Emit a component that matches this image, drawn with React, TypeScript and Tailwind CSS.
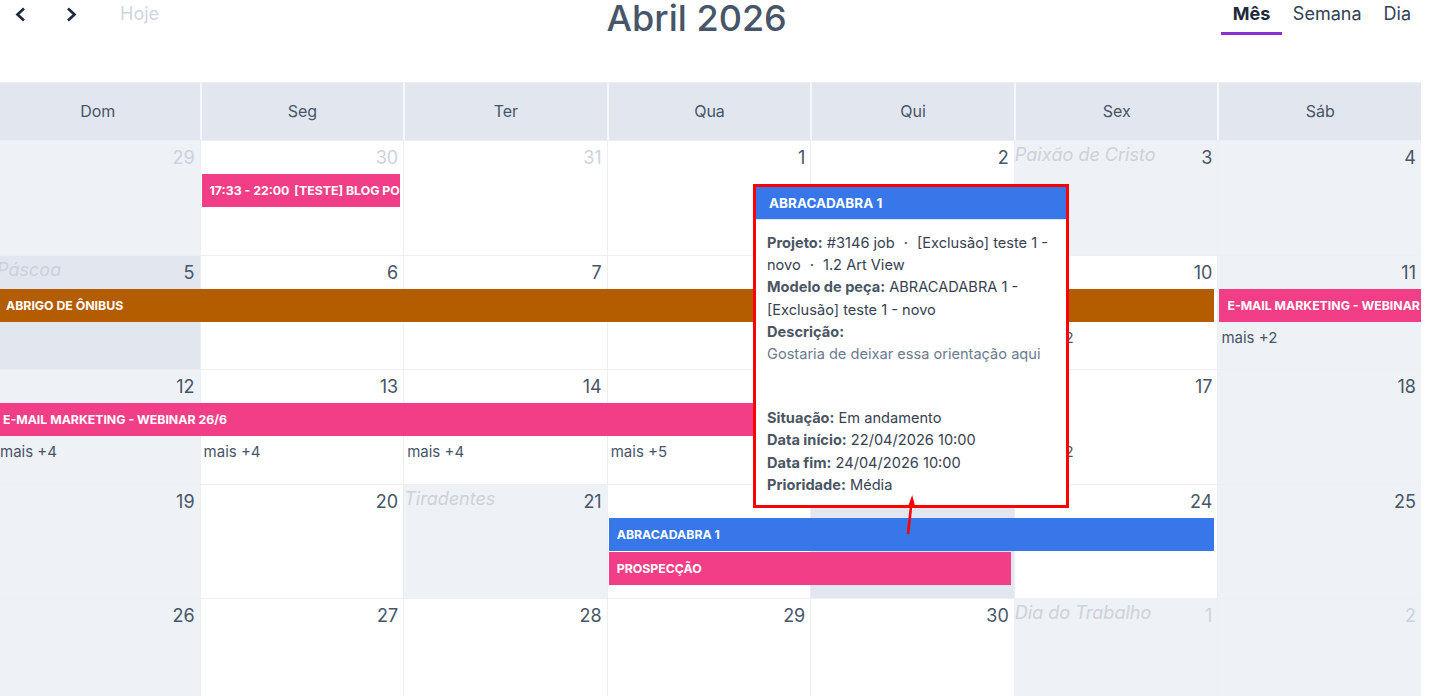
import React from "react";

type Tone = "white" | "light" | "dark";

const toneClass: Record<Tone, string> = {
  white: "bg-white",
  light: "bg-[#eef1f6]",
  dark: "bg-[#e2e7ef]",
};

const colStart = ["col-start-1", "col-start-2", "col-start-3", "col-start-4", "col-start-5", "col-start-6", "col-start-7"];
const colSpan = ["col-span-1", "col-span-2", "col-span-3", "col-span-4", "col-span-5", "col-span-6", "col-span-7"];
const rowStart = ["row-start-1", "row-start-2", "row-start-3", "row-start-4"];

interface Day {
  n: number;
  out?: boolean;
  tone: Tone;
  holiday?: string;
}

interface Bar {
  col: number;
  span: number;
  row: number;
  title: string;
  time?: string;
  color: string;
  starts: boolean;
  ends: boolean;
  pad?: string;
}

interface More {
  col: number;
  row: number;
  count: number;
}

interface Week {
  days: Day[];
  bars: Bar[];
  more: More[];
}

const PINK = "bg-[#f23e86]";
const BROWN = "bg-[#b35c00]";
const BLUE = "bg-[#3777e9]";

const weeks: Week[] = [
  {
    days: [
      { n: 29, out: true, tone: "light" },
      { n: 30, out: true, tone: "white" },
      { n: 31, out: true, tone: "white" },
      { n: 1, tone: "white" },
      { n: 2, tone: "white" },
      { n: 3, tone: "light", holiday: "Paixão de Cristo" },
      { n: 4, tone: "light" },
    ],
    bars: [
      {
        col: 1,
        span: 1,
        row: 1,
        time: "17:33 - 22:00",
        title: "[TESTE] BLOG POST DE LANÇAMENTO",
        color: PINK,
        starts: true,
        ends: true,
      },
    ],
    more: [],
  },
  {
    days: [
      { n: 5, tone: "dark", holiday: "Páscoa" },
      { n: 6, tone: "white" },
      { n: 7, tone: "white" },
      { n: 8, tone: "white" },
      { n: 9, tone: "white" },
      { n: 10, tone: "white" },
      { n: 11, tone: "light" },
    ],
    bars: [
      { col: 0, span: 6, row: 1, title: "ABRIGO DE ÔNIBUS", color: BROWN, starts: false, ends: true, pad: "pl-[10px]" },
      { col: 6, span: 1, row: 1, title: "E-MAIL MARKETING - WEBINAR 26/6", color: PINK, starts: true, ends: false },
    ],
    more: [
      { col: 5, row: 2, count: 2 },
      { col: 6, row: 2, count: 2 },
    ],
  },
  {
    days: [
      { n: 12, tone: "light" },
      { n: 13, tone: "white" },
      { n: 14, tone: "white" },
      { n: 15, tone: "white" },
      { n: 16, tone: "white" },
      { n: 17, tone: "white" },
      { n: 18, tone: "light" },
    ],
    bars: [
      { col: 0, span: 5, row: 1, title: "E-MAIL MARKETING - WEBINAR 26/6", color: PINK, starts: false, ends: true, pad: "pl-[7px]" },
    ],
    more: [
      { col: 0, row: 2, count: 4 },
      { col: 1, row: 2, count: 4 },
      { col: 2, row: 2, count: 4 },
      { col: 3, row: 2, count: 5 },
      { col: 4, row: 2, count: 3 },
      { col: 5, row: 2, count: 2 },
    ],
  },
  {
    days: [
      { n: 19, tone: "light" },
      { n: 20, tone: "white" },
      { n: 21, tone: "light", holiday: "Tiradentes" },
      { n: 22, tone: "white" },
      { n: 23, tone: "dark" },
      { n: 24, tone: "white" },
      { n: 25, tone: "light" },
    ],
    bars: [
      { col: 3, span: 3, row: 1, title: "ABRACADABRA 1", color: BLUE, starts: true, ends: true },
      { col: 3, span: 2, row: 2, title: "PROSPECÇÃO", color: PINK, starts: true, ends: true },
    ],
    more: [],
  },
  {
    days: [
      { n: 26, tone: "light" },
      { n: 27, tone: "white" },
      { n: 28, tone: "white" },
      { n: 29, tone: "white" },
      { n: 30, tone: "white" },
      { n: 1, out: true, tone: "light", holiday: "Dia do Trabalho" },
      { n: 2, out: true, tone: "light" },
    ],
    bars: [],
    more: [],
  },
];

const weekdayNames = ["Dom", "Seg", "Ter", "Qua", "Qui", "Sex", "Sáb"];

function Chevron({ dir }: { dir: "left" | "right" }) {
  return (
    <svg width="13" height="15" viewBox="0 0 13 15" fill="none">
      <polyline
        points={dir === "left" ? "10,1.5 3.5,7.5 10,13.5" : "3,1.5 9.5,7.5 3,13.5"}
        stroke="#1e293b"
        strokeWidth="2.7"
        strokeLinejoin="miter"
      />
    </svg>
  );
}

function WeekRow({ week }: { week: Week }) {
  return (
    <div className="relative h-[114.5px] border-t border-[#eceff4]">
      {/* day backgrounds */}
      <div className="absolute inset-0 grid grid-cols-7">
        {week.days.map((d, i) => (
          <div
            key={i}
            className={`${toneClass[d.tone]} ${i > 0 ? "border-l border-[#eceff4]" : ""}`}
          />
        ))}
      </div>
      {/* numbers, events and "mais" links */}
      <div className="relative grid grid-cols-7">
        {week.days.map((d, i) => (
          <div
            key={`n${i}`}
            className={`${colStart[i]} row-start-1 flex h-[33px] items-start justify-between overflow-visible`}
          >
            <span className="whitespace-nowrap pl-[1px] pt-[3px] text-[18px] italic leading-[22px] text-[#cdd2da]">
              {d.holiday ?? ""}
            </span>
            <span
              className={`pr-[5px] pt-[5px] text-[18px] leading-[24px] ${d.out ? "text-[#cbd3de]" : "text-[#475569]"}`}
            >
              {d.n}
            </span>
          </div>
        ))}
        {week.bars.map((b, i) => (
          <div
            key={`b${i}`}
            className={`${colStart[b.col]} ${colSpan[b.span - 1]} ${rowStart[b.row]} mb-[1px] h-[33px] overflow-hidden whitespace-nowrap ${b.color} ${b.starts ? "ml-[2px]" : ""} ${b.ends ? "mr-[3px]" : ""} ${b.pad ?? "pl-[8px]"} text-[12.3px] font-bold leading-[33px] text-white`}
          >
            {b.time && <span className="mr-[5px]">{b.time}</span>}
            {b.title}
          </div>
        ))}
        {week.more.map((m, i) => (
          <div
            key={`m${i}`}
            className={`${colStart[m.col]} ${rowStart[m.row]} pl-[4px] pt-[5px] text-[15px] leading-[20px] text-[#475569]`}
          >
            mais +{m.count}
          </div>
        ))}
      </div>
    </div>
  );
}

function Dot() {
  return <span className="mx-[9px]">·</span>;
}

function Field({ label, children }: { label: string; children?: React.ReactNode }) {
  return (
    <p>
      <span className="font-bold text-[#4b5563]">{label}</span> {children}
    </p>
  );
}

export default function App() {
  return (
    <div className="relative h-[696px] w-[1431px] overflow-hidden bg-white font-['Inter',sans-serif]">
      {/* toolbar */}
      <div className="flex h-[82px] items-start justify-between pr-[9px]">
        <div className="flex items-start">
          <button className="ml-[14px] mt-[7px]">
            <Chevron dir="left" />
          </button>
          <button className="ml-[38px] mt-[7px]">
            <Chevron dir="right" />
          </button>
          <button className="ml-[42px] pr-[13px] pt-[2px] text-[18px] leading-[24px] text-[#cfd6e2]">
            Hoje
          </button>
        </div>
        <h1 className="text-[36px] font-medium leading-[36px] text-[#475569]">Abril 2026</h1>
        <div className="flex items-start">
          <div className="border-b-[3px] border-[#8b2fd0] px-[11.5px] pb-[6px] pt-[2px] text-[18px] font-bold leading-[24px] text-[#1e293b]">
            Mês
          </div>
          <div className="px-[11px] pt-[2px] text-[18px] leading-[24px] text-[#334155]">Semana</div>
          <div className="px-[11px] pt-[2px] text-[18px] leading-[24px] text-[#334155]">Dia</div>
        </div>
      </div>

      {/* month grid */}
      <div className="-ml-[4px] w-[1425px]">
        <div className="grid h-[58px] grid-cols-7 border-t border-[#eceff4] bg-[#e2e7ef]">
          {weekdayNames.map((n, i) => (
            <div
              key={n}
              className={`flex items-center justify-center pb-[1px] text-[16px] text-[#475569] ${i > 0 ? "border-l-2 border-[#f5f7fa]" : ""}`}
            >
              {n}
            </div>
          ))}
        </div>
        {weeks.map((w, i) => (
          <WeekRow key={i} week={w} />
        ))}
      </div>

      {/* event popover */}
      <div className="absolute left-[906px] top-[503px] h-[9px] w-[9px] rotate-45 border border-[#cbd5e1] bg-white" />
      <div className="absolute left-[753px] top-[184px] h-[324px] w-[316px] border-[3px] border-[#ff0000] bg-white">
        <div className="h-[33px] border-b border-[#dbe4f3] bg-[#3777e9] pl-[13px] text-[13.5px] font-bold leading-[32px] text-white">
          ABRACADABRA 1
        </div>
        <div className="px-[11px] pt-[12px] text-[14.6px] leading-[22.2px] text-[#374151]">
          <Field label="Projeto:">
            #3146 job
            <Dot />
            [Exclusão] teste 1 -
            <br />
            novo
            <Dot />
            1.2 Art View
          </Field>
          <Field label="Modelo de peça:">
            ABRACADABRA 1 -
            <br />
            [Exclusão] teste 1 - novo
          </Field>
          <Field label="Descrição:" />
          <p className="mb-[42px] text-[#6b7a90]">Gostaria de deixar essa orientação aqui</p>
          <Field label="Situação:">Em andamento</Field>
          <Field label="Data início:">22/04/2026 10:00</Field>
          <Field label="Data fim:">24/04/2026 10:00</Field>
          <Field label="Prioridade:">Média</Field>
        </div>
      </div>

      {/* red pointer arrow */}
      <svg className="absolute left-[900px] top-[490px]" width="20" height="50" viewBox="0 0 20 50">
        <line x1="8" y1="44" x2="11.3" y2="14" stroke="#ff0000" strokeWidth="2.6" />
        <polygon points="12.2,5 8.4,15.5 15,16" fill="#ff0000" />
      </svg>
    </div>
  );
}
